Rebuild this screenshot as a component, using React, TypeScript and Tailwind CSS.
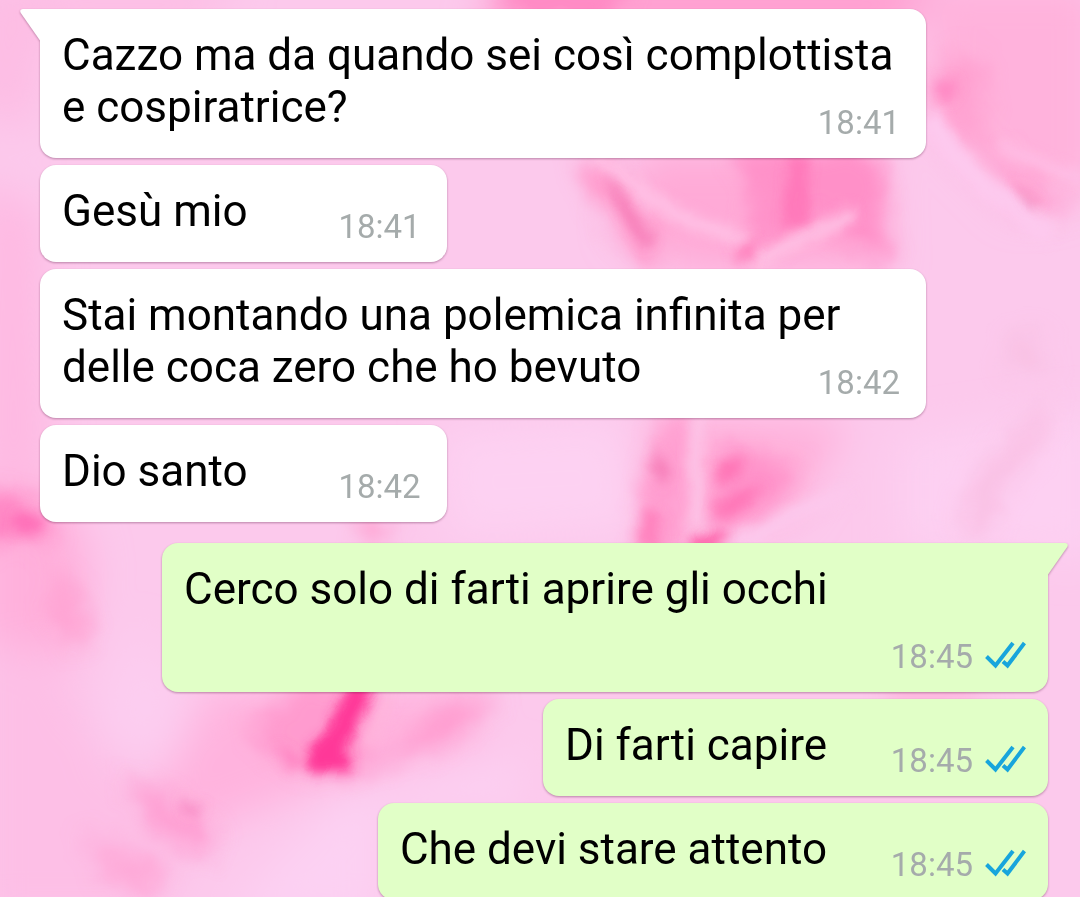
import clsx from 'clsx';

interface Message {
  id: number;
  text: string;
  time: string;
  outgoing: boolean;
  first?: boolean;
}

const messages: Message[] = [
  { id: 1, text: 'Cazzo ma da quando sei così complottista e cospiratrice?', time: '18:41', outgoing: false, first: true },
  { id: 2, text: 'Gesù mio', time: '18:41', outgoing: false },
  { id: 3, text: 'Stai montando una polemica infinita per delle coca zero che ho bevuto', time: '18:42', outgoing: false },
  { id: 4, text: 'Dio santo', time: '18:42', outgoing: false },
  { id: 5, text: 'Cerco solo di farti aprire gli occhi', time: '18:45', outgoing: true, first: true },
  { id: 6, text: 'Di farti capire', time: '18:45', outgoing: true },
  { id: 7, text: 'Che devi stare attento', time: '18:45', outgoing: true },
];

function Wallpaper() {
  return (
    <svg
      className="absolute inset-0 h-full w-full"
      viewBox="0 0 1080 897"
      preserveAspectRatio="xMidYMid slice"
      aria-hidden="true"
    >
      <defs>
        <filter id="wide" x="-50%" y="-50%" width="200%" height="200%">
          <feGaussianBlur stdDeviation="20" />
        </filter>
        <filter id="mid" x="-20%" y="-20%" width="140%" height="140%">
          <feGaussianBlur stdDeviation="11" result="soft" />
          <feTurbulence type="fractalNoise" baseFrequency="0.03" numOctaves="2" seed="4" />
          <feDisplacementMap in="soft" scale="20" xChannelSelector="R" yChannelSelector="G" />
        </filter>
        <filter id="fine" x="-20%" y="-20%" width="140%" height="140%">
          <feGaussianBlur stdDeviation="6" result="soft" />
          <feTurbulence type="fractalNoise" baseFrequency="0.04" numOctaves="2" seed="9" />
          <feDisplacementMap in="soft" scale="8" xChannelSelector="R" yChannelSelector="G" />
        </filter>
      </defs>
      <rect width="1080" height="897" fill="#fcc9ec" />

      {/* Soft clouds */}
      <g filter="url(#wide)">
        <path d="M-30 -20H240L200 30H50L30 130L-30 110Z" fill="#fdbde4" />
        <path d="M500 -30H940L900 40H480Z" fill="#ff9fd0" />
        <path d="M930 -20H1100V190L1020 210L960 150L925 90Z" fill="#ffb2dc" />
        <path d="M640 150H880L885 270L690 275L620 230Z" fill="#ffaad7" />
        <path d="M-20 180L40 210L50 470L-20 490Z" fill="#feb9e2" />
        <path d="M-20 490L60 480L90 560L80 660L-20 640Z" fill="#ffb0dc" />
        <path d="M-20 640L60 660L110 760L200 830L150 920H-20Z" fill="#fdbfe6" />
        <path d="M210 690H470L480 740L330 780L200 830L150 800Z" fill="#ffb3de" />
        <path d="M650 420H850L790 520L650 545Z" fill="#ffb0da" />
        <path d="M440 430L620 420L640 530L450 540Z" fill="#fdd1f2" />
        <path d="M900 440L1100 410V560L900 545Z" fill="#fdd0f2" />
        <path d="M340 800L520 760L520 800L380 810V920H220Z" fill="#fcd1f3" />
        <path d="M130 630L190 690L180 760L90 740Z" fill="#fccdf0" />
      </g>

      {/* Folds */}
      <g filter="url(#mid)">
        <path d="M930 90C945 50 975 40 985 70C990 100 975 120 990 160C960 150 938 125 930 90Z" fill="#ff9ccd" opacity="0.75" />
        <path d="M980 150C1010 155 1050 180 1072 214C1045 222 1010 200 980 150Z" fill="#ff9fcf" opacity="0.8" />
        <path d="M575 155L615 162L668 250L650 270C620 240 590 200 575 155Z" fill="#ff9ccd" />
        <path d="M725 150H875C888 200 888 240 884 270L850 240L815 215L775 245L740 240C765 210 755 180 725 150Z" fill="#ff90c8" />
        <path d="M-20 490L20 495L45 518L60 525L30 542L-20 548Z" fill="#ff85c3" />
        <path d="M50 560L75 590L95 630L70 650L50 610Z" fill="#ff9dcf" opacity="0.7" />
        <path d="M668 415C640 470 645 520 635 555H682C685 500 675 460 694 415Z" fill="#ff9ccf" />
        <path d="M725 440L800 470L780 500L715 535C705 500 715 470 725 440Z" fill="#ff92c9" />
        <path d="M300 680H375L365 760L395 752L440 705L505 695L450 738L380 768L310 775L265 750L250 730Z" fill="#ff95ca" opacity="0.8" />
        <path d="M125 775L220 830L205 860L150 825Z" fill="#ff92ca" opacity="0.7" />
        <path d="M80 835L170 865L155 895L120 890Z" fill="#ff9fd2" opacity="0.7" />
        <path d="M365 515L385 520L388 545H362Z" fill="#ff9ccd" />
        <path d="M500 -10H630L610 14H510Z" fill="#ff82c0" />
        <path d="M1040 400C1010 450 950 480 960 530L985 540C990 500 1035 470 1052 410Z" fill="#f9bbe0" opacity="0.7" />
        <path d="M1005 345C1020 320 1055 330 1045 370L1010 375Z" fill="#f8bfe2" opacity="0.8" />
        <path d="M885 690H1000L960 700H890Z" fill="#ff9ccd" />
      </g>

      {/* Light ridges */}
      <g filter="url(#fine)" fill="none">
        <path d="M592 150C640 195 680 225 750 240" stroke="#ffc4e7" strokeWidth="16" opacity="0.8" />
        <path d="M750 268C785 245 815 235 855 212" stroke="#fec3e6" strokeWidth="14" opacity="0.9" />
        <path d="M930 115C950 165 990 190 1050 235" stroke="#fdc9ee" strokeWidth="22" />
        <path d="M1000 146L1085 180" stroke="#fec5e9" strokeWidth="10" opacity="0.7" />
        <path d="M700 415C690 455 702 490 694 545" stroke="#fdc8ea" strokeWidth="14" opacity="0.8" />
        <path d="M735 545L850 490" stroke="#fcc8ec" strokeWidth="16" />
        <path d="M388 695L366 748" stroke="#ffb5dc" strokeWidth="12" opacity="0.8" />
      </g>

      {/* Saturated veins */}
      <g filter="url(#fine)">
        <path d="M350 682H376C366 715 350 735 346 750L354 772L308 772C302 752 316 738 328 728Z" fill="#ff3898" />
        <path d="M602 170L618 188L655 240L648 250L622 215Z" fill="#f067a8" opacity="0.6" />
        <path d="M788 155L808 158L810 225L782 232Z" fill="#ff6bb0" opacity="0.6" />
        <path d="M738 242L758 240L754 264L732 260Z" fill="#ff70b3" opacity="0.6" />
        <path d="M933 78L958 80L952 104L936 100Z" fill="#ff78ba" opacity="0.6" />
        <path d="M715 465L746 456L735 478L718 484Z" fill="#ff66ad" opacity="0.7" />
        <path d="M718 500L765 482L742 514L714 522Z" fill="#ff6cb0" opacity="0.7" />
        <path d="M656 446L670 470L666 488L652 470Z" fill="#f067a8" opacity="0.6" />
        <path d="M690 534L730 532L715 550H688Z" fill="#ff509f" opacity="0.8" />
        <path d="M642 505L662 515L660 550H638Z" fill="#ff70b3" opacity="0.6" />
        <path d="M14 512L46 516L40 534L14 532Z" fill="#ff60b0" opacity="0.6" />
        <path d="M1012 180L1044 207L1028 207Z" fill="#ee70aa" opacity="0.5" />
        <path d="M274 744L304 762L290 772Z" fill="#ff70b8" opacity="0.6" />
        <path d="M180 800L204 806L196 816L184 812Z" fill="#f57fba" opacity="0.6" />
      </g>
    </svg>
  );
}

function ReadTicks() {
  return (
    <svg className="h-8 w-[41px]" viewBox="0 0 41 32" fill="none" stroke="#18a5dc" strokeWidth="4" role="img" aria-label="Letto">
      <path d="M1.500 15.500L10.500 24.500L28 2" />
      <path d="M18 20.500L22.500 24.500L39.500 2" />
    </svg>
  );
}

function Tail({ outgoing }: { outgoing: boolean }) {
  return (
    <svg
      className={clsx('absolute top-0 h-8 w-[21px]', outgoing ? '-right-5 -scale-x-100' : '-left-5')}
      viewBox="0 0 21 32"
      aria-hidden="true"
    >
      <path d="M21 0H3C0.500 0 -0.500 2 0.800 4L20 31.500H21Z" fill={outgoing ? '#e1ffc7' : '#ffffff'} />
    </svg>
  );
}

function Bubble({ message }: { message: Message }) {
  const { text, time, outgoing, first } = message;

  return (
    <li
      className={clsx(
        'relative flow-root max-w-[886px] rounded-2xl pt-5 pb-[15px] pl-[22px] drop-shadow-[0_1px_1px_rgba(60,0,40,0.35)]',
        'text-[44px] leading-[52px] text-black',
        outgoing ? 'self-end bg-[#e1ffc7] pr-[22px]' : 'self-start bg-white pr-[26px]',
        first && (outgoing ? 'rounded-tr-none' : 'rounded-tl-none'),
        first && outgoing && 'mt-[14px]',
      )}
    >
      {first && <Tail outgoing={outgoing} />}
      {text}
      {/* floats beside the last line, or drops under it when there is no room */}
      <span
        className={clsx(
          'float-right flex items-center justify-end gap-3 pt-[22px]',
          outgoing ? 'w-[199px]' : 'w-[173px]',
        )}
      >
        <time className="text-[33px] leading-10 text-[#a5abab]">{time}</time>
        {outgoing && <ReadTicks />}
      </span>
    </li>
  );
}

export default function App() {
  return (
    <main className="relative h-screen overflow-hidden bg-[#fcc9ec] font-[Roboto,sans-serif]">
      <Wallpaper />
      <ul className="relative flex flex-col gap-[7px] pt-[9px] pr-8 pl-10">
        {messages.map((message) => (
          <Bubble key={message.id} message={message} />
        ))}
      </ul>
    </main>
  );
}
